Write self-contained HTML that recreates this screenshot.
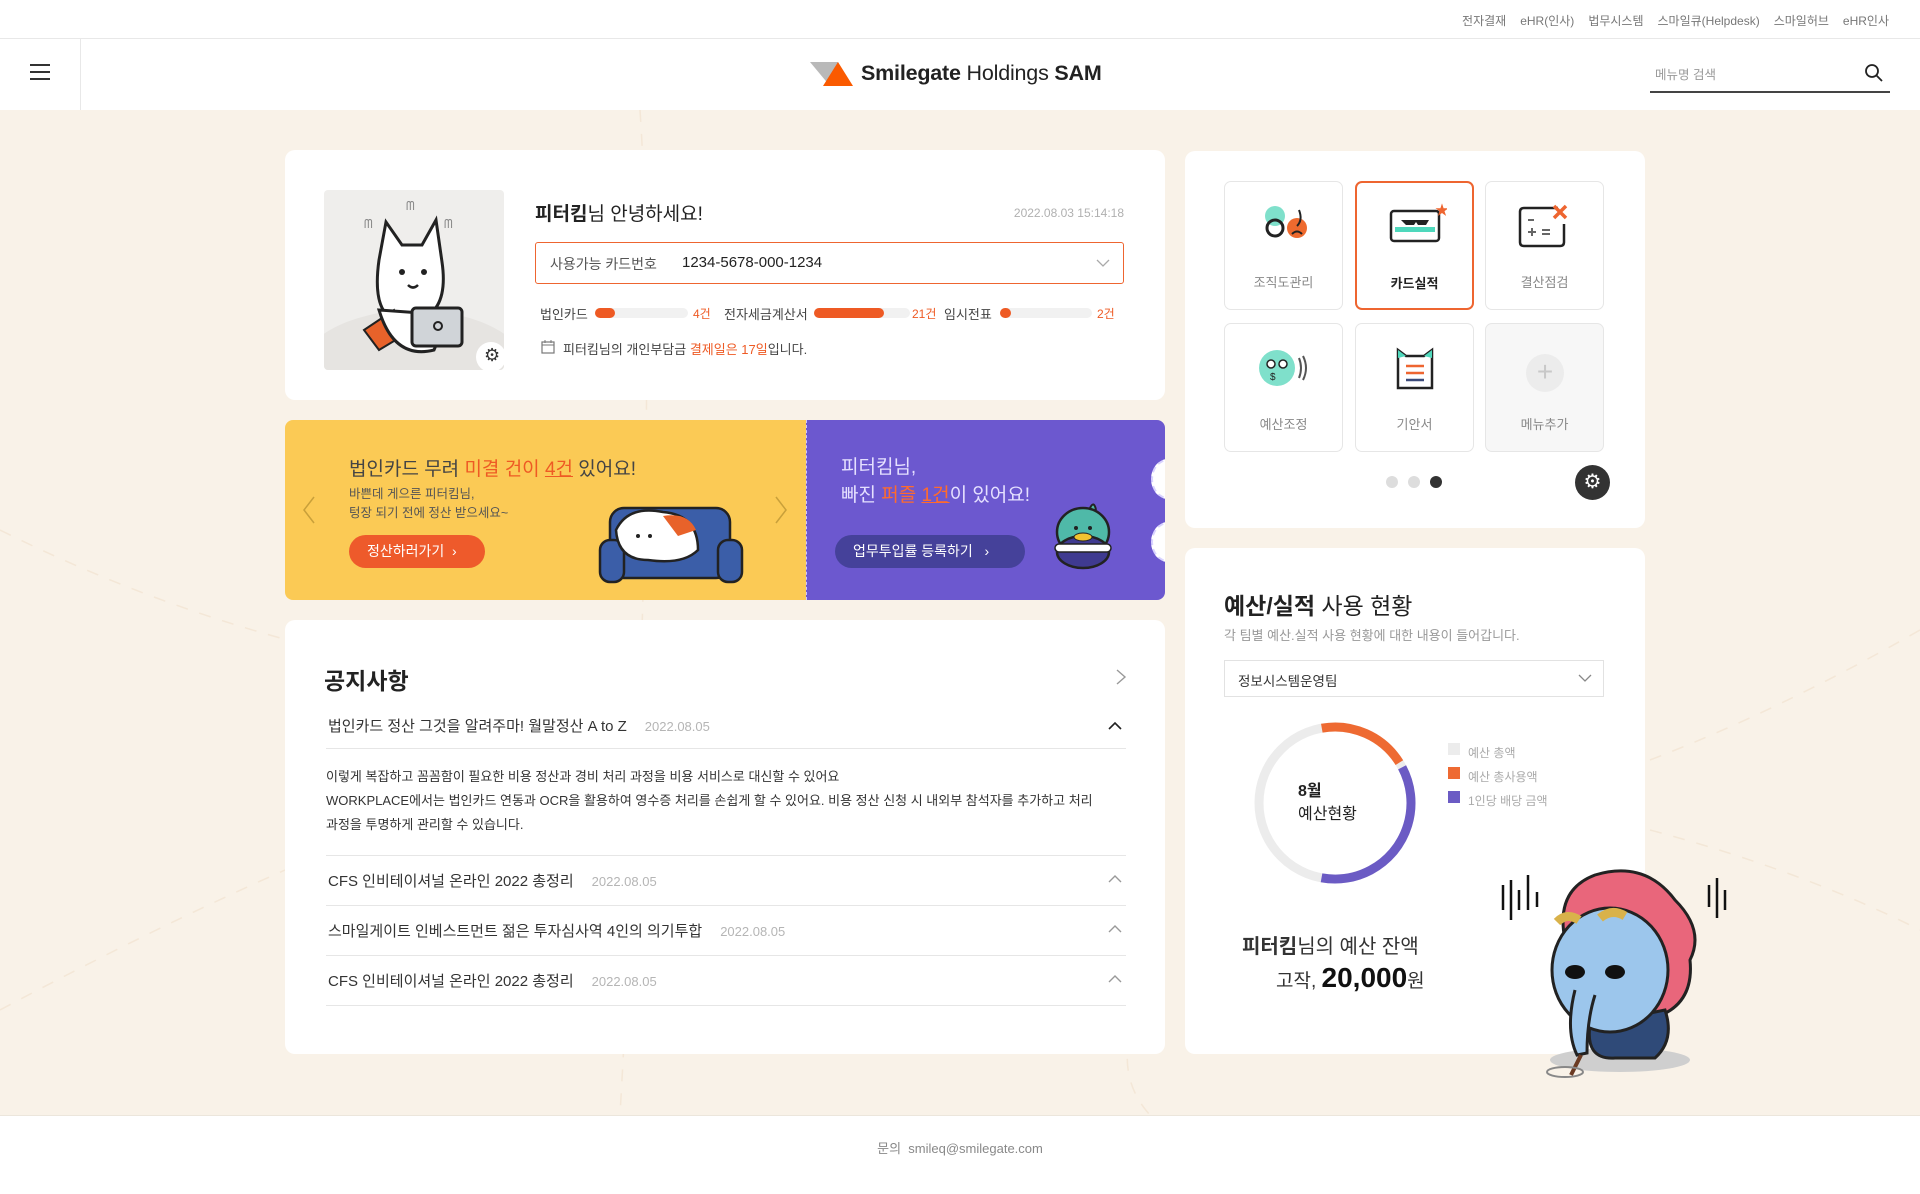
<!DOCTYPE html>
<html lang="ko"><head><meta charset="utf-8">
<style>
*{margin:0;padding:0;box-sizing:border-box}
body{width:1920px;height:1194px;position:relative;overflow:hidden;background:#f9f2e8;font-family:"Liberation Sans","Noto Sans CJK KR",sans-serif;color:#222}
.a{position:absolute}
.card{position:absolute;background:#fff;border-radius:10px}
.top{left:0;top:0;width:1920px;height:39px;background:#fff;border-bottom:1px solid #e8e8e8}
.hdr{left:0;top:39px;width:1920px;height:71px;background:#fff}
.util{right:31px;top:12px;font-size:12px;color:#777;word-spacing:0}
.util span{margin-left:14px}
.tile{position:absolute;width:119px;height:129px;border:1px solid #e6e6e6;border-radius:7px;background:#fff;text-align:center;font-size:13px;color:#888}
.tile .lb{position:absolute;left:0;right:0;top:90px}
.tile svg{position:absolute;left:30px;top:20px}
.ni{position:absolute;left:328px;width:798px;font-size:15px;color:#333}
.ni .d{color:#b5b5b5;font-size:13px;margin-left:18px}
.ln{position:absolute;left:326px;width:800px;height:1px;background:#e6e6e6}
.chev{position:absolute;right:4px}
</style></head><body>

<svg class="a" style="left:0;top:110px" width="1920" height="1005">
<g fill="none" stroke="#f0e0cc" stroke-width="1.5" stroke-dasharray="12 12" opacity=".6">
<path d="M0 420 Q200 520 420 560"/>
<path d="M1650 650 Q1780 600 1920 520"/>
<path d="M1650 720 Q1800 760 1920 820"/>
<path d="M640 0 Q660 300 620 1005"/>
<path d="M1160 860 Q1100 950 1150 1005"/>
<path d="M0 900 Q150 820 285 760"/>
</g></svg>

<div class="a top"></div>
<div class="a util"><span>전자결재</span><span>eHR(인사)</span><span>법무시스템</span><span>스마일큐(Helpdesk)</span><span>스마일허브</span><span>eHR인사</span></div>
<div class="a hdr"></div>
<div class="a" style="left:80px;top:39px;width:1px;height:71px;background:#e8e8e8"></div>
<div class="a" style="left:30px;top:64px;width:20px;height:2px;background:#333;box-shadow:0 7px 0 #333,0 14px 0 #333"></div>
<svg class="a" style="left:808px;top:60px" width="46" height="28"><polygon points="2,2 30,2 22,26" fill="#b9b9b9"/><polygon points="30,2 45,26 15,26" fill="#fa5a00"/></svg>
<div class="a" style="left:861px;top:61px;font-size:21.5px;letter-spacing:-0.2px;white-space:nowrap"><b>Smilegate</b> Holdings <b>SAM</b></div>
<div class="a" style="left:1655px;top:64px;font-size:12.5px;color:#999">메뉴명 검색</div>
<svg class="a" style="left:1864px;top:63px" width="20" height="20"><circle cx="8" cy="8" r="6" fill="none" stroke="#222" stroke-width="1.8"/><line x1="12.5" y1="12.5" x2="18" y2="18" stroke="#222" stroke-width="1.8"/></svg>
<div class="a" style="left:1650px;top:91px;width:240px;height:2px;background:#444"></div>

<div class="card" style="left:285px;top:150px;width:880px;height:250px"></div>
<div class="a" style="left:324px;top:190px;width:180px;height:180px;background:#efeeec;border-radius:4px;overflow:hidden">
<svg width="180" height="180"><ellipse cx="90" cy="190" rx="120" ry="70" fill="#e6e4e1"/>
<path d="M55 70 L62 32 L78 55 L98 55 L112 30 L118 72 Q125 120 95 130 L70 130 Q48 120 55 70Z" fill="#fff" stroke="#222" stroke-width="3"/>
<circle cx="78" cy="82" r="3" fill="#222"/><circle cx="100" cy="82" r="3" fill="#222"/><path d="M84 95 q5 5 10 0" stroke="#222" fill="none" stroke-width="2.5"/>
<path d="M40 140 L70 120 L80 145 L55 160Z" fill="#e8622a" stroke="#222" stroke-width="2"/>
<path d="M55 120 Q70 170 110 160 L125 125Z" fill="#fff" stroke="#222" stroke-width="3"/>
<rect x="88" y="118" width="50" height="38" rx="4" fill="#d0d4d8" stroke="#222" stroke-width="3"/><circle cx="114" cy="136" r="4" fill="none" stroke="#222" stroke-width="2"/>
<text x="40" y="38" font-size="12" fill="#888">ᗰ</text><text x="82" y="20" font-size="12" fill="#888">ᗰ</text><text x="120" y="38" font-size="12" fill="#888">ᗰ</text></svg>
<div class="a" style="left:152px;top:152px;width:30px;height:30px;border-radius:50%;background:#fff"></div>
<div class="a" style="left:160px;top:155px;font-size:18px;color:#333">⚙</div>
</div>
<div class="a" style="left:535px;top:199px;font-size:19px"><b>피터킴</b>님 안녕하세요!</div>
<div class="a" style="left:1000px;top:206px;width:124px;text-align:right;font-size:12px;color:#b0b0b0">2022.08.03 15:14:18</div>
<div class="a" style="left:535px;top:242px;width:589px;height:42px;border:1.5px solid #ee6530;border-radius:3px"></div>
<div class="a" style="left:550px;top:254px;font-size:14px;color:#555">사용가능 카드번호</div>
<div class="a" style="left:682px;top:254px;font-size:15px;color:#222">1234-5678-000-1234</div>
<svg class="a" style="left:1096px;top:258px" width="14" height="10"><path d="M1 2 L7 8 L13 2" fill="none" stroke="#aaa" stroke-width="1.3"/></svg>
<div class="a" style="left:540px;top:304px;font-size:13px;color:#444">법인카드</div>
<div class="a" style="left:595px;top:308px;width:93px;height:10px;background:#f1f1f1;border-radius:5px"><div style="width:20px;height:10px;background:#ee5a24;border-radius:5px"></div></div>
<div class="a" style="left:693px;top:305px;font-size:12px;color:#ee5a24">4건</div>
<div class="a" style="left:724px;top:304px;font-size:13px;color:#444">전자세금계산서</div>
<div class="a" style="left:814px;top:308px;width:96px;height:10px;background:#f1f1f1;border-radius:5px"><div style="width:70px;height:10px;background:#ee5a24;border-radius:5px"></div></div>
<div class="a" style="left:912px;top:305px;font-size:12px;color:#ee5a24">21건</div>
<div class="a" style="left:944px;top:304px;font-size:13px;color:#444">임시전표</div>
<div class="a" style="left:1000px;top:308px;width:92px;height:10px;background:#f1f1f1;border-radius:5px"><div style="width:11px;height:10px;background:#ee5a24;border-radius:5px"></div></div>
<div class="a" style="left:1097px;top:305px;font-size:12px;color:#ee5a24">2건</div>
<svg class="a" style="left:541px;top:339px" width="14" height="15"><rect x="1" y="3" width="12" height="11" fill="none" stroke="#777" stroke-width="1.2"/><line x1="1" y1="6" x2="13" y2="6" stroke="#777"/><line x1="4" y1="1" x2="4" y2="4" stroke="#777"/><line x1="10" y1="1" x2="10" y2="4" stroke="#777"/></svg>
<div class="a" style="left:563px;top:339px;font-size:13px;color:#444">피터킴님의 개인부담금 <span style="color:#ee5a24">결제일은 17일</span>입니다.</div>

<div class="a" style="left:285px;top:420px;width:880px;height:180px;border-radius:8px;overflow:hidden">
<div class="a" style="left:0;top:0;width:521px;height:180px;background:#fbca55"></div>
<div class="a" style="left:521px;top:0;width:359px;height:180px;background:#6c58cf;border-left:1px dashed #cfc8ff"></div>
<div class="a" style="left:866px;top:39px;width:34px;height:40px;border-radius:50%;background:#fff;border:2px dashed #d9d3ff"></div>
<div class="a" style="left:866px;top:102px;width:34px;height:40px;border-radius:50%;background:#fff;border:2px dashed #d9d3ff"></div>
</div>
<div class="a" style="left:349px;top:454px;font-size:19px;color:#444">법인카드 무려 <span style="color:#ee5a24">미결 건이 <u>4건</u></span> 있어요!</div>
<div class="a" style="left:349px;top:485px;font-size:12.5px;color:#555;line-height:19px">바쁜데 게으른 피터킴님,<br>텅장 되기 전에 정산 받으세요~</div>
<div class="a" style="left:349px;top:535px;width:136px;height:33px;border-radius:17px;background:#ee5a2b;color:#fff;font-size:14px;line-height:33px;padding-left:18px">정산하러가기 &nbsp;›</div>
<svg class="a" style="left:300px;top:495px" width="20" height="30"><path d="M14 2 L4 15 L14 28" fill="none" stroke="#c9a03a" stroke-width="1.5"/></svg>
<svg class="a" style="left:772px;top:495px" width="20" height="30"><path d="M4 2 L14 15 L4 28" fill="none" stroke="#c9a03a" stroke-width="1.5"/></svg>
<svg class="a" style="left:598px;top:500px" width="146" height="92"><rect x="12" y="8" width="120" height="70" rx="14" fill="#3b5ea8" stroke="#222" stroke-width="2.5"/><rect x="2" y="40" width="24" height="42" rx="10" fill="#3b5ea8" stroke="#222" stroke-width="2.5"/><rect x="120" y="40" width="24" height="42" rx="10" fill="#3b5ea8" stroke="#222" stroke-width="2.5"/><path d="M18 30 Q30 5 65 12 Q100 15 100 50 Q85 65 50 60 Q20 60 18 30Z" fill="#fff" stroke="#222" stroke-width="2.5"/><path d="M65 16 Q90 12 98 30 L80 36Z" fill="#e8622a"/><circle cx="40" cy="36" r="2" fill="#222"/><circle cx="52" cy="36" r="2" fill="#222"/></svg>
<div class="a" style="left:841px;top:454px;font-size:19px;color:#e5e0ff;line-height:28px">피터킴님,<br>빠진 <span style="color:#ff6b2c">퍼즐 <u>1건</u></span>이 있어요!</div>
<div class="a" style="left:835px;top:535px;width:190px;height:33px;border-radius:17px;background:#45419a;color:#fff;font-size:14px;line-height:33px;padding-left:18px">업무투입률 등록하기 &nbsp;&nbsp;›</div>
<svg class="a" style="left:1050px;top:500px" width="66" height="72"><path d="M40 8 Q44 0 46 10" stroke="#222" stroke-width="2" fill="#4fb9a8"/><ellipse cx="33" cy="32" rx="26" ry="24" fill="#4fb9a8" stroke="#222" stroke-width="2.5"/><ellipse cx="33" cy="52" rx="26" ry="16" fill="#3f3a90" stroke="#222" stroke-width="2.5"/><rect x="5" y="44" width="56" height="8" rx="4" fill="#fff" stroke="#222" stroke-width="1.5"/><ellipse cx="33" cy="37" rx="9" ry="4" fill="#f2c230" stroke="#222"/><circle cx="26" cy="28" r="2" fill="#222"/><circle cx="40" cy="28" r="2" fill="#222"/></svg>

<div class="card" style="left:285px;top:620px;width:880px;height:434px"></div>
<div class="a" style="left:324px;top:662px;font-size:23px;font-weight:bold">공지사항</div>
<svg class="a" style="left:1115px;top:668px" width="12" height="18"><path d="M2 2 L10 9 L2 16" fill="none" stroke="#999" stroke-width="1.4"/></svg>
<div class="ni" style="top:715px">법인카드 정산 그것을 알려주마! 월말정산 A to Z<span class="d">2022.08.05</span><svg class="chev" style="top:6px" width="14" height="10"><path d="M1 8 L7 2 L13 8" fill="none" stroke="#222" stroke-width="1.6"/></svg></div>
<div class="ln" style="top:748px"></div>
<div class="a" style="left:326px;top:765px;font-size:13px;color:#333;line-height:24px">이렇게 복잡하고 꼼꼼함이 필요한 비용 정산과 경비 처리 과정을 비용 서비스로 대신할 수 있어요<br>WORKPLACE에서는 법인카드 연동과 OCR을 활용하여 영수증 처리를 손쉽게 할 수 있어요. 비용 정산 신청 시 내외부 참석자를 추가하고 처리<br>과정을 투명하게 관리할 수 있습니다.</div>
<div class="ln" style="top:855px"></div>
<div class="ni" style="top:870px">CFS 인비테이셔널 온라인 2022 총정리<span class="d">2022.08.05</span><svg class="chev" style="top:4px" width="14" height="10"><path d="M1 8 L7 2 L13 8" fill="none" stroke="#999" stroke-width="1.4"/></svg></div>
<div class="ln" style="top:905px"></div>
<div class="ni" style="top:920px">스마일게이트 인베스트먼트 젊은 투자심사역 4인의 의기투합<span class="d">2022.08.05</span><svg class="chev" style="top:4px" width="14" height="10"><path d="M1 8 L7 2 L13 8" fill="none" stroke="#999" stroke-width="1.4"/></svg></div>
<div class="ln" style="top:955px"></div>
<div class="ni" style="top:970px">CFS 인비테이셔널 온라인 2022 총정리<span class="d">2022.08.05</span><svg class="chev" style="top:4px" width="14" height="10"><path d="M1 8 L7 2 L13 8" fill="none" stroke="#999" stroke-width="1.4"/></svg></div>
<div class="ln" style="top:1005px"></div>

<div class="card" style="left:1185px;top:151px;width:460px;height:377px"></div>
<div class="tile" style="left:1224px;top:181px"><svg width="60" height="50"><circle cx="20" cy="14" r="10" fill="#7fe0cb"/><circle cx="20" cy="26" r="8" fill="none" stroke="#222" stroke-width="3"/><circle cx="42" cy="26" r="10" fill="#ee6a2e"/><path d="M44 8 Q48 18 42 24" stroke="#222" stroke-width="2" fill="none"/><path d="M37 32 Q42 27 47 32" stroke="#222" stroke-width="2" fill="none"/></svg><div class="lb">조직도관리</div></div>
<div class="tile" style="left:1355px;top:181px;border:2px solid #ee6530"><svg width="60" height="50"><rect x="4" y="8" width="48" height="30" rx="3" fill="#fff" stroke="#222" stroke-width="2.5"/><rect x="8" y="24" width="40" height="5" fill="#4fd8bc"/><path d="M14 17 h28 l-3 5 h-8 l-2 -3 l-2 3 h-8z" fill="#222"/><text x="48" y="12" font-size="14" fill="#ee6530">★</text></svg><div class="lb" style="color:#222;font-weight:bold">카드실적</div></div>
<div class="tile" style="left:1485px;top:181px"><svg width="60" height="50"><path d="M42 6 H8 Q4 6 4 10 V40 Q4 44 8 44 H44 Q48 44 48 40 V22" fill="none" stroke="#222" stroke-width="2.5"/><path d="M38 4 L50 16 M50 4 L38 16" stroke="#ee6530" stroke-width="3.5"/><path d="M12 18 h6 M12 30 h8 M16 26 v8 M26 28 h8 M26 32 h8" stroke="#666" stroke-width="2"/></svg><div class="lb">결산점검</div></div>
<div class="tile" style="left:1224px;top:323px"><svg width="64" height="50"><circle cx="22" cy="24" r="18" fill="#7fe0cb"/><circle cx="16" cy="20" r="4" fill="#fff" stroke="#222" stroke-width="1.5"/><circle cx="28" cy="20" r="4" fill="#fff" stroke="#222" stroke-width="1.5"/><path d="M44 14 Q48 24 44 34 M48 12 Q54 24 48 36" stroke="#555" stroke-width="2" fill="none"/><text x="15" y="36" font-size="10" fill="#222">$</text></svg><div class="lb">예산조정</div></div>
<div class="tile" style="left:1355px;top:323px"><svg width="60" height="50"><path d="M12 6 L20 12 L38 12 L46 6 V44 H12Z" fill="#fff" stroke="#222" stroke-width="2.5"/><path d="M12 6 L20 12 L12 14Z M46 6 L38 12 L46 14Z" fill="#4fd8bc"/><path d="M20 22 h18 M20 29 h18" stroke="#ee6530" stroke-width="2.5"/><path d="M20 36 h18" stroke="#3b4a7a" stroke-width="2.5"/></svg><div class="lb">기안서</div></div>
<div class="tile" style="left:1485px;top:323px;background:#f7f7f7"><div class="a" style="left:40px;top:30px;width:38px;height:38px;border-radius:50%;background:#ececec;color:#c8c8c8;font-size:28px;line-height:36px">+</div><div class="lb">메뉴추가</div></div>
<div class="a" style="left:1386px;top:476px;width:12px;height:12px;border-radius:50%;background:#ddd"></div>
<div class="a" style="left:1408px;top:476px;width:12px;height:12px;border-radius:50%;background:#ddd"></div>
<div class="a" style="left:1430px;top:476px;width:12px;height:12px;border-radius:50%;background:#333"></div>
<div class="a" style="left:1575px;top:465px;width:35px;height:35px;border-radius:50%;background:#333;color:#fff;font-size:20px;text-align:center;line-height:34px">⚙</div>

<div class="card" style="left:1185px;top:548px;width:460px;height:506px"></div>
<div class="a" style="left:1224px;top:587px;font-size:23px;color:#222"><b>예산/실적</b> 사용 현황</div>
<div class="a" style="left:1224px;top:625px;font-size:13px;color:#999">각 팀별 예산.실적 사용 현황에 대한 내용이 들어갑니다.</div>
<div class="a" style="left:1224px;top:660px;width:380px;height:37px;border:1px solid #e2e2e2"></div>
<div class="a" style="left:1238px;top:670px;font-size:13.5px;color:#333">정보시스템운영팀</div>
<svg class="a" style="left:1578px;top:673px" width="14" height="10"><path d="M1 2 L7 8 L13 2" fill="none" stroke="#888" stroke-width="1.3"/></svg>
<svg class="a" style="left:1250px;top:718px" width="170" height="170">
<circle cx="85" cy="85" r="76" fill="none" stroke="#ececec" stroke-width="9"/>
<circle cx="85" cy="85" r="76" fill="none" stroke="#ee6a32" stroke-width="9" stroke-dasharray="90 400" transform="rotate(-100 85 85)"/>
<circle cx="85" cy="85" r="76" fill="none" stroke="#6b5bc4" stroke-width="9" stroke-dasharray="170 400" transform="rotate(-28 85 85)"/>
</svg>
<div class="a" style="left:1298px;top:780px;font-size:16px;color:#222;line-height:23px"><b>8월</b><br>예산현황</div>
<div class="a" style="left:1448px;top:743px;width:12px;height:12px;background:#ececec"></div>
<div class="a" style="left:1448px;top:767px;width:12px;height:12px;background:#ee6a32"></div>
<div class="a" style="left:1448px;top:791px;width:12px;height:12px;background:#6b5bc4"></div>
<div class="a" style="left:1468px;top:741px;font-size:12px;color:#aaa;line-height:24px">예산 총액<br>예산 총사용액<br>1인당 배당 금액</div>
<div class="a" style="left:1242px;top:930px;font-size:20px;color:#333"><b>피터킴</b>님의 예산 잔액</div>
<div class="a" style="left:1276px;top:962px;font-size:19px;color:#333">고작, <b style="font-size:28px;color:#111">20,000</b>원</div>

<svg class="a" style="left:1495px;top:860px" width="250" height="220">
<g stroke="#111" stroke-width="2.5"><path d="M8 25 v25 M16 20 v40 M24 30 v20 M33 15 v35 M42 32 v15" /><path d="M214 25 v22 M222 18 v40 M230 30 v20"/></g>
<ellipse cx="125" cy="200" rx="70" ry="12" fill="#cfcfcf"/>
<path d="M70 80 Q60 30 100 15 Q150 0 180 40 Q210 70 195 100 Q200 150 150 160 L90 160 Q50 140 60 100Z" fill="#e9667b" stroke="#222" stroke-width="3"/>
<path d="M95 165 Q90 200 120 198 L160 198 Q180 180 170 150Z" fill="#2f4a78" stroke="#222" stroke-width="3"/>
<ellipse cx="115" cy="110" rx="58" ry="62" fill="#9cc6ec" stroke="#222" stroke-width="3"/>
<path d="M80 130 Q70 170 82 195 L92 193 Q92 160 100 135" fill="#9cc6ec" stroke="#222" stroke-width="3"/>
<line x1="86" y1="195" x2="76" y2="215" stroke="#6b3a22" stroke-width="4"/>
<ellipse cx="70" cy="212" rx="18" ry="5" fill="none" stroke="#888" stroke-width="2"/>
<ellipse cx="80" cy="112" rx="10" ry="7" fill="#111"/><ellipse cx="120" cy="112" rx="10" ry="7" fill="#111"/>
<path d="M62 62 q10 -10 22 -2 M105 58 q12 -10 25 -2" stroke="#d9b24a" stroke-width="9" fill="none"/>
</svg>

<div class="a" style="left:0;top:1115px;width:1920px;height:79px;background:#fff;border-top:1px solid #ece6dc"></div>
<div class="a" style="left:0;top:1138px;width:1920px;text-align:center;font-size:13px;color:#888">문의 &nbsp;smileq@smilegate.com</div>
</body></html>
